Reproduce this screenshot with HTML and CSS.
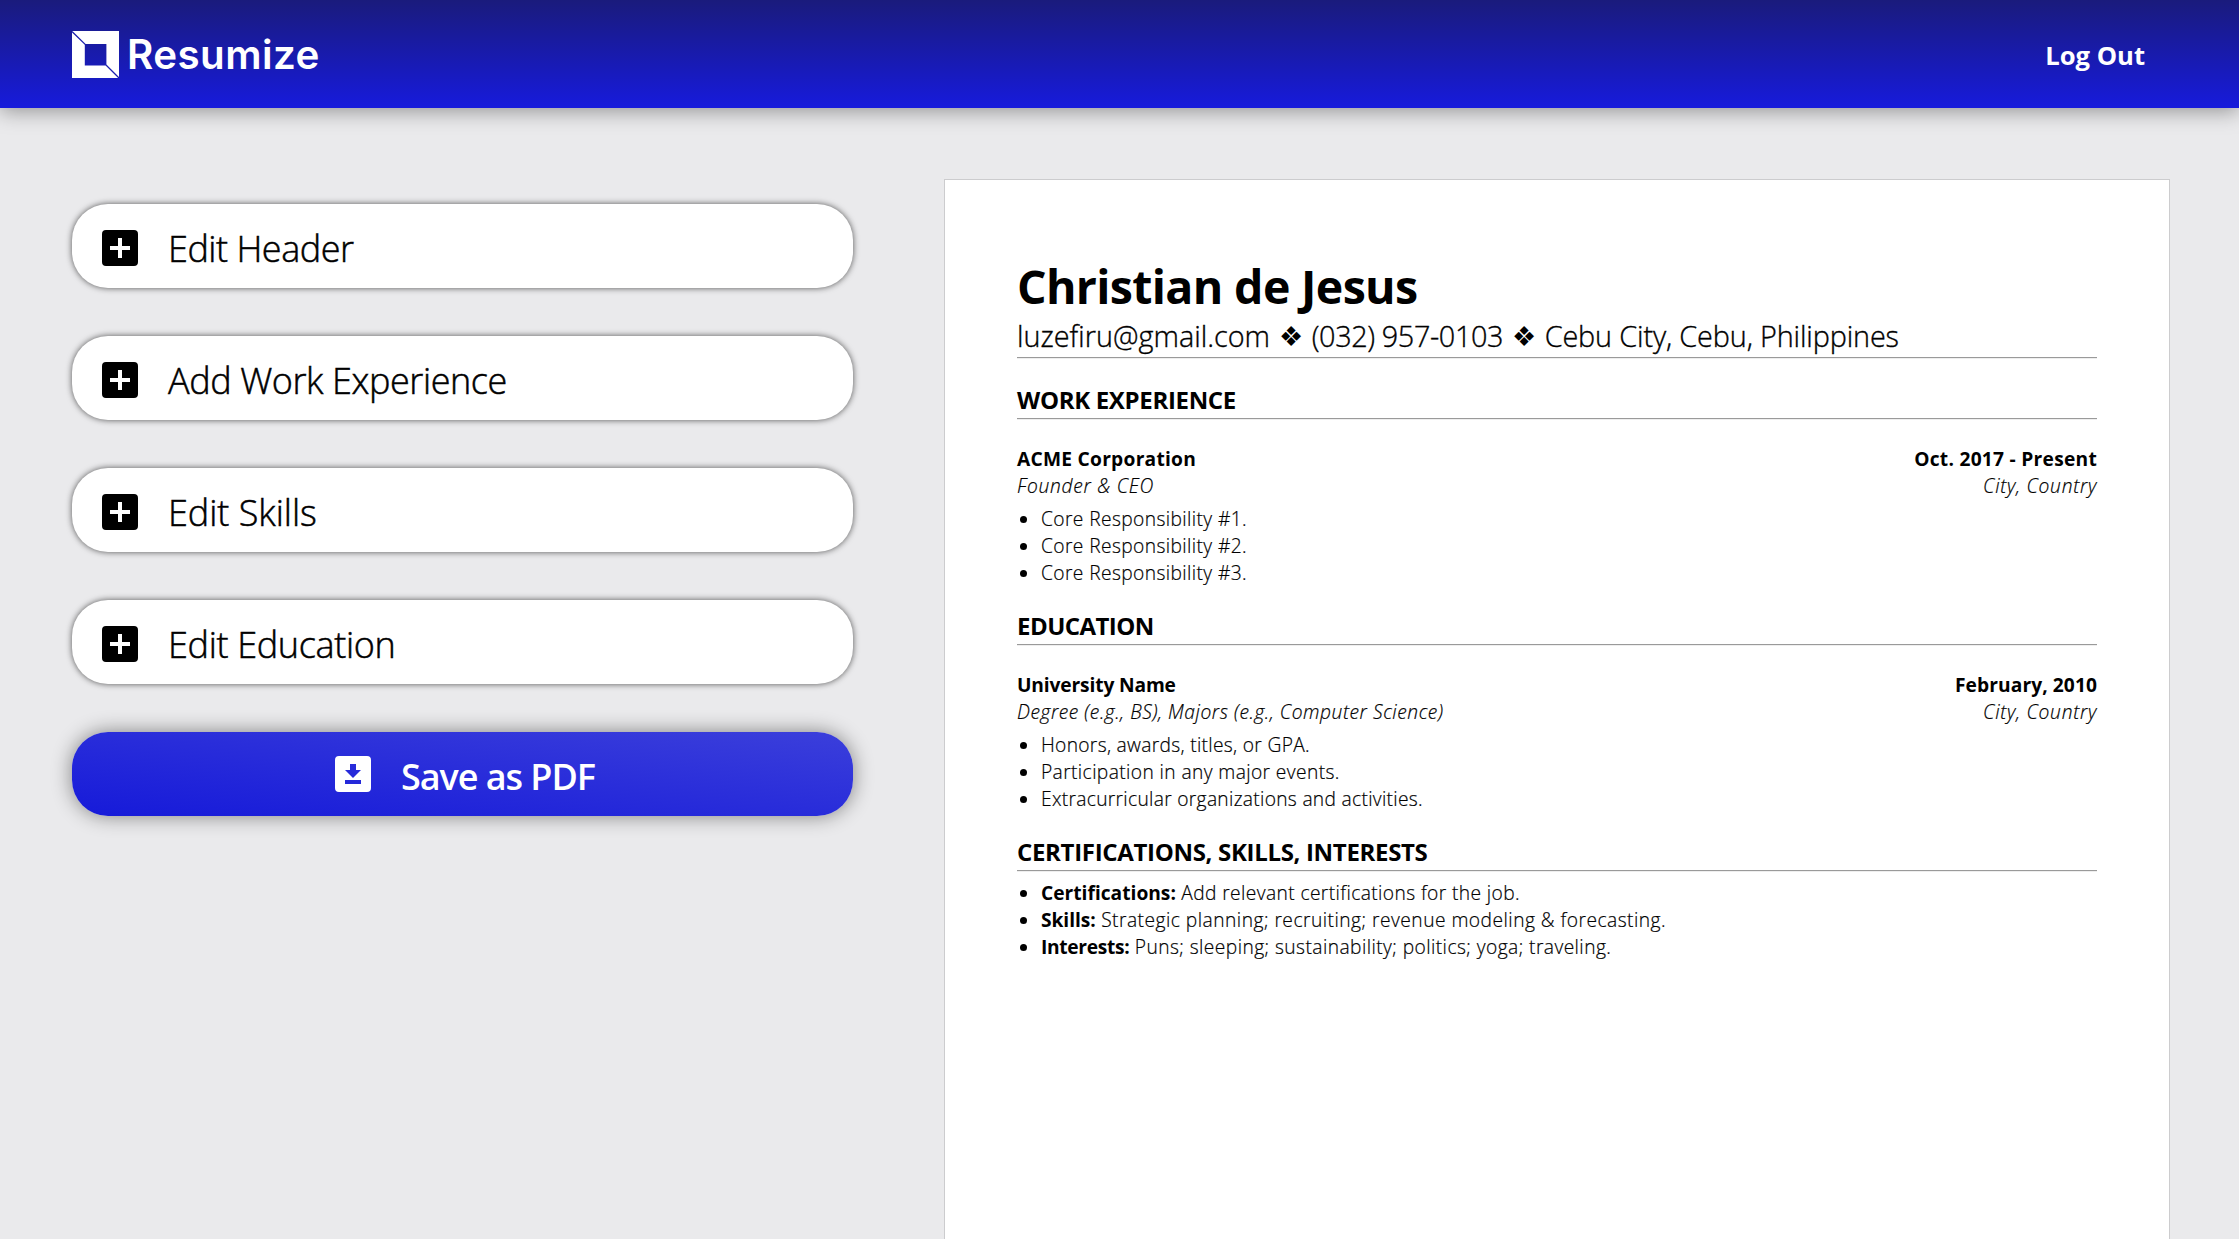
FILE: index.html
```html
<!DOCTYPE html>
<html lang="en">
<head>
<meta charset="utf-8">
<title>Resumize</title>
<link rel="stylesheet" href="styles.css">
</head>
<body>
<svg class="defs" aria-hidden="true">
  <symbol id="add-box" viewBox="3 3 18 18"><path d="M19 3H5a2 2 0 0 0-2 2v14a2 2 0 0 0 2 2h14a2 2 0 0 0 2-2V5a2 2 0 0 0-2-2zm-2 10h-4v4h-2v-4H7v-2h4V7h2v4h4v2z"/></symbol>
  <symbol id="download-box" viewBox="0 0 18 18"><path fill-rule="evenodd" d="M2 0h14a2 2 0 0 1 2 2v14a2 2 0 0 1-2 2H2a2 2 0 0 1-2-2V2a2 2 0 0 1 2-2zM7.5 4v3H5l4 4 4-4h-2.5V4zM5 12v2h8v-2z"/></symbol>
</svg>
<header class="topbar">
  <a class="brand">
    <svg class="brand-mark" viewBox="0 0 47 47"><path fill="#fff" fill-rule="evenodd" d="M0 0h47v47H0zM12.8 13v21.4h21.6V13z"/><path stroke="#1b1fae" stroke-width="1.3" d="M0 .5 13.2 13.4M34 34l13 13"/></svg>
    <span class="brand-name">Resumize</span>
  </a>
  <a class="logout">Log Out</a>
</header>
<main class="layout">
  <nav class="actions">
    <button class="card"><svg class="icon"><use href="#add-box"/></svg><span class="label edit-header">Edit Header</span></button>
    <button class="card"><svg class="icon"><use href="#add-box"/></svg><span class="label add-work">Add Work Experience</span></button>
    <button class="card"><svg class="icon"><use href="#add-box"/></svg><span class="label edit-skills">Edit Skills</span></button>
    <button class="card"><svg class="icon"><use href="#add-box"/></svg><span class="label edit-education">Edit Education</span></button>
    <button class="card save"><svg class="icon"><use href="#download-box"/></svg><span class="label">Save as PDF</span></button>
  </nav>
  <article class="page">
    <h1 class="name">Christian de Jesus</h1>
    <div class="contact">
      <span>luzefiru@gmail.com</span><span class="sep">❖</span><span class="phone">(032) 957-0103</span><span class="sep">❖</span><span class="address">Cebu City, Cebu, Philippines</span>
    </div>
    <div class="rule header-rule"></div>

    <section class="section">
      <h2 class="heading work">WORK EXPERIENCE</h2>
      <div class="rule"></div>
      <div class="entry">
        <div class="row strong"><span class="company">ACME Corporation</span><span class="dates">Oct. 2017 - Present</span></div>
        <div class="row sub"><span>Founder &amp; CEO</span><span>City, Country</span></div>
        <ul class="list">
          <li><span>Core Responsibility #1.</span></li>
          <li><span>Core Responsibility #2.</span></li>
          <li><span>Core Responsibility #3.</span></li>
        </ul>
      </div>
    </section>

    <section class="section">
      <h2 class="heading education">EDUCATION</h2>
      <div class="rule"></div>
      <div class="entry">
        <div class="row strong"><span class="school">University Name</span><span class="graduated">February, 2010</span></div>
        <div class="row sub"><span class="degree">Degree (e.g., BS), Majors (e.g., Computer Science)</span><span>City, Country</span></div>
        <ul class="list">
          <li><span class="tight">Honors, awards, titles, or GPA.</span></li>
          <li><span>Participation in any major events.</span></li>
          <li><span class="tight">Extracurricular organizations and activities.</span></li>
        </ul>
      </div>
    </section>

    <section class="section">
      <h2 class="heading">CERTIFICATIONS, SKILLS, INTERESTS</h2>
      <div class="rule"></div>
      <ul class="list summary">
        <li><span><b>Certifications:</b> Add relevant certifications for the job.</span></li>
        <li><span class="wide"><b class="skills">Skills:</b> Strategic planning; recruiting; revenue modeling &amp; forecasting.</span></li>
        <li><span class="puns"><b class="interests">Interests:</b> Puns; sleeping; sustainability; politics; yoga; traveling.</span></li>
      </ul>
    </section>
  </article>
</main>
</body>
</html>
```
FILE: styles.css
```css
* { box-sizing: border-box; }
html, body { height: 100%; }
body {
  margin: 0;
  overflow: hidden;
  background: #eaeaec;
  color: #000;
  font-family: "Open Sans", "Noto Sans", sans-serif;
  font-weight: 300;
}
.defs { display: none; }

/* Top bar */
.topbar {
  position: relative;
  height: 108px;
  display: flex;
  align-items: center;
  justify-content: space-between;
  padding: 0 94px 0 72px;
  background: linear-gradient(#1a1b7c, #171bdc);
  box-shadow: 0 3px 20px rgba(0, 0, 0, .38);
  color: #fff;
}
.brand { display: flex; align-items: center; gap: 8px; }
.brand-mark { width: 47px; height: 47px; }
.brand-name { padding-top: 2px; font: 600 40.3px/48px Inter, sans-serif; letter-spacing: .45px; }
.logout { font-size: 25.6px; font-weight: 700; line-height: 36px; padding-top: 4px; }

/* Columns */
.layout {
  display: flex;
  gap: 91px;
  height: calc(100% - 108px);
  padding: 71px 0 0 72px;
}
.actions { width: 781px; display: flex; flex-direction: column; gap: 48px; padding-top: 25px; }
.card {
  display: flex;
  align-items: flex-start;
  gap: 30px;
  height: 84px;
  padding: 0 30px;
  border: 0;
  border-radius: 36px;
  background: #fff;
  box-shadow: 0 0 6px rgba(0, 0, 0, .65);
  color: #000;
  font: inherit;
  text-align: left;
}
.icon { width: 36px; height: 36px; margin-top: 26px; fill: currentColor; }
.label { margin-top: 20px; font-size: 36px; line-height: 49px; -webkit-text-stroke: .5px; }
.edit-header { letter-spacing: -.48px; }
.add-work { letter-spacing: -.42px; }
.edit-skills { letter-spacing: -.03px; }
.edit-education { letter-spacing: -.33px; }
.save {
  padding-left: 263px;
  background: linear-gradient(to top right, #161ad9, #3b3fdb);
  box-shadow: 0 0 20px rgba(0, 0, 0, .45);
  color: #fff;
  font-weight: 600;
}
.save .icon { margin-top: 24px; }
.save .label { letter-spacing: -1.05px; -webkit-text-stroke: 0; }

/* Resume sheet */
.page {
  width: 1226px;
  flex: none;
  padding: 72px;
  border: 1px solid #ccccce;
  border-bottom: 0;
  background: #fff;
}
.name { margin: 0; padding-top: 2px; font-size: 46.5px; font-weight: 700; line-height: 64px; letter-spacing: -.66px; }
.contact { display: flex; gap: 8.8px; font-size: 28.8px; line-height: 36px; -webkit-text-stroke: .35px; }
.sep { font-size: 26.5px; -webkit-text-stroke: 0; }
.phone { letter-spacing: -.38px; }
.address { letter-spacing: -.14px; }
.rule { height: 2px; border-top: 1px solid #9a9a9a; border-bottom: 1px solid #eee; }
.header-rule { margin-top: 3px; }
.section { margin-top: 24px; }
.header-rule + .section { margin-top: 25px; }
.heading { margin: 0 0 2px; font-size: 24px; font-weight: 700; line-height: 32px; letter-spacing: -.32px; }
.education { letter-spacing: -.54px; }
.entry { margin-top: 25px; }
.row { display: flex; justify-content: space-between; font-size: 19.2px; line-height: 27px; }
.strong { font-weight: 700; }
.company { letter-spacing: .25px; }
.dates { letter-spacing: .26px; }
.school { letter-spacing: -.14px; }
.graduated { letter-spacing: .08px; }
.sub { font-style: italic; letter-spacing: .72px; -webkit-text-stroke: .2px; }
.degree { letter-spacing: .55px; }
.list { margin: 6px 0 0; padding: 0; list-style: none; font-size: 19.2px; line-height: 27px; letter-spacing: .4px; -webkit-text-stroke: .2px; }
.list li { display: grid; grid-template-columns: 24px 1fr; }
.list li::before { content: ""; width: 7px; height: 7px; margin: 11px 0 0 3px; border-radius: 50%; background: #000; }
.list b { font-weight: 700; letter-spacing: 0; -webkit-text-stroke: 0; }
.list .tight { letter-spacing: .31px; }
.list .wide { letter-spacing: .48px; }
.list .puns { letter-spacing: .43px; }
.list .skills { letter-spacing: -.05px; }
.list .interests { letter-spacing: -.32px; }
.summary { margin-top: 7px; }
```
